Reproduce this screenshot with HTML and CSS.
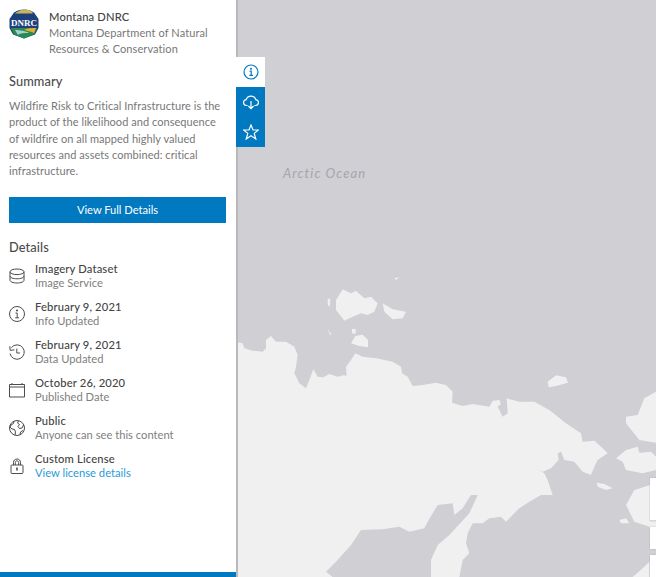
FILE: index.html
```html
<!DOCTYPE html>
<html lang="en">
<head>
<meta charset="utf-8">
<title>Montana DNRC</title>
<link rel="stylesheet" href="styles.css">
</head>
<body>
<div class="app">
  <aside class="panel">
    <div class="panel-body">
      <header class="owner">
        <svg class="logo" viewBox="0 0 30 30" aria-hidden="true">
          <path d="M15 0.5C19 0.5 22 1.5 25 3.5L29.5 10V19L26 25.5L15 29.5L4 25.5L0.5 19V10L5 3.5C8 1.5 11 0.5 15 0.5Z" fill="#1d3f7c"/>
          <path d="M7 3.5L12 1L17 0.5L22 1.5L24 4.5H6Z" fill="#c9b45a"/>
          <path d="M2 19H28L25.5 25L15 29.5L5 25.5Z" fill="#2e8a4a"/>
          <path d="M15 21C19 19 24 19 27 19L25 24C21 22 18 22 15 21Z" fill="#e5ad35"/>
          <path d="M6 21C11 21 17 22 20 24C16 24 11 24 9 26Z" fill="#9fd0e0"/>
          <text class="logo-text" x="15" y="16.5" text-anchor="middle">DNRC</text>
        </svg>
        <div class="owner-text">
          <div class="owner-name">Montana DNRC</div>
          <div class="owner-org">Montana Department of Natural Resources &amp; Conservation</div>
        </div>
      </header>
      <h2 class="section-title summary-title">Summary</h2>
      <p class="summary">Wildfire Risk to Critical Infrastructure is the product of the likelihood and consequence of wildfire on all mapped highly valued resources and assets combined: critical infrastructure.</p>
      <a class="primary-btn">View Full Details</a>
      <h2 class="section-title details-title">Details</h2>
      <ul class="details">
        <li class="detail">
          <svg class="detail-icon" viewBox="0 0 16 16"><ellipse cx="8" cy="3.8" rx="7" ry="2.8"/><path d="M1 3.8V12.2C1 13.8 4 15 8 15S15 13.8 15 12.2V3.8M1 8C1 9.6 4 10.8 8 10.8S15 9.6 15 8"/></svg>
          <div><div class="detail-title">Imagery Dataset</div><div class="detail-sub">Image Service</div></div>
        </li>
        <li class="detail">
          <svg class="detail-icon" viewBox="0 0 16 16"><circle cx="8" cy="8" r="7.5"/><circle class="dot" cx="8" cy="4.6" r="1"/><path d="M6.5 7H8.2V11.8M6.2 11.8H10"/></svg>
          <div><div class="detail-title">February 9, 2021</div><div class="detail-sub">Info Updated</div></div>
        </li>
        <li class="detail">
          <svg class="detail-icon" viewBox="0 0 16 16"><path d="M2.4 3.6A7.2 7.2 0 1 1 1 9.5"/><path d="M0.8 2.2L1.2 6.4L5.4 5.8"/><path d="M7.8 4.6V9H11"/></svg>
          <div><div class="detail-title">February 9, 2021</div><div class="detail-sub">Data Updated</div></div>
        </li>
        <li class="detail">
          <svg class="detail-icon" viewBox="0 0 16 16"><path d="M0.5 2.5H15.5V15H0.5ZM0.5 5H15.5M3 1V3M13 1V3M5.5 2V2.5M8 2V2.5M10.5 2V2.5"/></svg>
          <div><div class="detail-title">October 26, 2020</div><div class="detail-sub">Published Date</div></div>
        </li>
        <li class="detail">
          <svg class="detail-icon" viewBox="0 0 16 16"><circle cx="8" cy="8" r="7.5"/><path d="M5 1.3L4.5 3.5L2 5L1 7L3 9L5.5 9.5L6.5 12L6 15M9.5 1L8.5 3L10.5 4.5L9 6.5L10.5 8.5L13 8L14.5 5M11 15L11.5 12L14 10.5"/></svg>
          <div><div class="detail-title">Public</div><div class="detail-sub">Anyone can see this content</div></div>
        </li>
        <li class="detail">
          <svg class="detail-icon" viewBox="0 0 16 16"><rect x="2" y="7" width="12" height="8.5" rx="1"/><path d="M4.5 7V4.5C4.5 2.4 6 1 8 1S11.5 2.4 11.5 4.5V7M6.3 7V4.6C6.3 3.5 7 2.8 8 2.8S9.7 3.5 9.7 4.6V7"/><path class="bold" d="M8 9.6V12.6"/></svg>
          <div><div class="detail-title">Custom License</div><a class="detail-link">View license details</a></div>
        </li>
      </ul>
    </div>
    <div class="panel-foot"></div>
  </aside>
  <main class="map">
    <svg class="map-land" viewBox="0 -780 1260 1731" preserveAspectRatio="none" aria-hidden="true">
      <path d="M0 245L20 250L25 265L50 272L80 275L90 265L90 240L105 228L120 245L150 245L175 260L185 285L180 320L175 340L190 370L210 385L220 360L232 328L245 350L262 352L280 342L305 350L325 345L332 350L330 320L345 300L358 280L380 290L420 295L470 305L495 320L498 340L515 350L530 378L560 375L600 368L630 375L650 395L648 428L680 438L710 432L760 440L770 422L790 420L795 432L785 440L800 470L815 460L812 415L850 425L895 425L940 450L990 490L1035 520L1040 545L1075 542L1100 565L1115 580L1085 600L1075 620L1065 645L1040 635L1015 605L985 600L975 575L965 580L968 600L945 625L920 635L900 625L925 640L935 660L950 705L915 705L880 725L850 745L810 785L795 770L760 775L740 790L710 790L695 820L690 850L700 880L680 900L670 951L585 951L585 900L605 855L640 825L700 760L725 705L705 705L680 745L655 765L650 730L605 735L575 785L565 805L520 815L490 800L440 808L375 810L345 855L300 905L270 935L290 951L0 951Z"/>
      <path d="M300 120L320 88L345 100L360 92L385 115L405 110L425 130L415 155L395 165L375 160L340 175L325 182L300 150Z"/>
      <path d="M440 130L470 148L510 155L500 175L470 178L445 155Z"/>
      <path d="M345 250L358 228L380 224L396 240L396 262L370 258Z"/>
      <path d="M348 206L360 208L358 222L348 220Z"/>
      <path d="M275 115L283 118L282 140L275 135Z"/>
      <path d="M275 207L287 224L282 224Z"/>
      <path d="M475 55L490 52L480 60Z"/>
      <path d="M935 365L960 346L990 352L996 368L960 378L938 382Z"/>
      <path d="M1260 395L1225 415L1205 465L1170 470L1170 490L1210 540L1260 548Z"/>
      <path d="M1140 595L1170 570L1205 560L1210 578L1245 575L1260 590L1260 630L1220 640L1170 630L1160 605Z"/>
      <path d="M1260 670L1195 690L1170 735L1195 785L1240 800L1260 830Z"/>
      <path d="M1150 780L1170 775L1180 790L1155 790Z"/>
      <path d="M1082 668L1105 672L1130 685L1110 690L1085 680Z"/>
      <path d="M1190 951L1220 925L1240 905L1240 951Z"/>
    </svg>
    <div class="map-label">Arctic Ocean</div>
    <nav class="tabs">
      <button class="tab tab-active">
        <svg viewBox="0 0 16 16"><circle cx="8" cy="8" r="7"/><circle class="dot" cx="8" cy="4.8" r="1"/><path d="M6.6 7.2H8.2V11.4M6.4 11.4H10"/></svg>
      </button>
      <button class="tab">
        <svg viewBox="0 0 16 16"><path d="M4.6 11.5H3.5C1.8 11.5 0.5 10.2 0.5 8.6C0.5 7 1.7 5.8 3.2 5.7C3.8 3.6 5.7 2.2 8 2.2C10.3 2.2 12.2 3.6 12.8 5.7C14.3 5.8 15.5 7 15.5 8.6C15.5 10.2 14.2 11.5 12.5 11.5H11.4M8 7V14.6M5.4 12L8 14.6L10.6 12"/></svg>
      </button>
      <button class="tab">
        <svg viewBox="0 0 16 16"><path d="M8 1L10 6H15.5L11.2 9.4L12.8 15L8 11.8L3.2 15L4.8 9.4L0.5 6H6Z"/></svg>
      </button>
    </nav>
    <div class="map-widgets">
      <div class="widget widget-zoom"></div>
      <div class="widget widget-home"></div>
      <div class="widget widget-last"></div>
    </div>
  </main>
</div>
</body>
</html>
```

FILE: styles.css
```css
* { box-sizing: border-box; }
html, body { margin: 0; height: 100%; overflow: hidden; }
body { font-family: "Lato", "Liberation Sans", sans-serif; color: #4c4c4c; }
.app { display: flex; width: 656px; height: 577px; }

.panel { width: 238px; flex: none; display: flex; flex-direction: column; background: #fff; border-right: 2px solid #b8b8bd; z-index: 1; }
.panel-body { flex: 1; padding: 8px 10px 0 9px; }
.panel-foot { height: 5px; background: #0079c1; }

.owner { display: flex; gap: 10px; }
.logo { width: 30px; height: 30px; flex: none; margin-top: 1px; }
.logo-text { font-family: "Liberation Serif", serif; font-size: 9px; font-weight: 700; fill: #fff; }
.owner-text { padding-top: 1px; }
.owner-name { font-size: 11.2px; font-weight: 500; line-height: 16px; letter-spacing: 0.15px; color: #444; }
.owner-org { font-size: 11px; line-height: 16.4px; letter-spacing: 0.1px; color: #777; }

.section-title { margin: 0; font-size: 12.8px; font-weight: 500; line-height: 18px; letter-spacing: 0.1px; color: #4c4c4c; }
.summary-title { margin-top: 14px; }
.summary { margin: 8px 0 0; font-size: 11px; line-height: 16.4px; letter-spacing: 0.05px; color: #777; }
.primary-btn { display: block; margin-top: 17px; height: 26px; background: #0079c1; color: #fff; font-size: 11.1px; line-height: 26px; text-align: center; }
.details-title { margin-top: 15px; }

.details { list-style: none; margin: 6px 0 0; padding: 0; display: flex; flex-direction: column; gap: 10px; }
.detail { display: flex; align-items: center; gap: 10px; height: 28px; }
.detail-icon { width: 16px; height: 16px; flex: none; fill: none; stroke: #4c4c4c; stroke-width: 1; }
.detail-icon .dot { fill: #4c4c4c; stroke: none; }
.detail-icon .bold { stroke-width: 1.6; }
.detail-title { font-size: 11.2px; font-weight: 500; line-height: 14px; letter-spacing: 0.15px; color: #444; }
.detail-sub { font-size: 11.2px; line-height: 14px; color: #808080; }
.detail-link { display: block; font-size: 11.2px; line-height: 14px; color: #2a9ad8; }

.map { position: relative; flex: 1; background: #cfcfd4; }
.map-land { position: absolute; left: -2px; top: 0; width: 420px; height: 577px; fill: #f0f0f0; }
.map-label { position: absolute; left: 45px; top: 165px; font-size: 13px; font-style: italic; letter-spacing: 1.1px; color: #a6a6ac; }

.tabs { position: absolute; z-index: 3; left: -2px; top: 57px; width: 29px; display: flex; flex-direction: column; background: #0079c1; }
.tab { display: flex; align-items: center; justify-content: center; width: 29px; height: 30px; padding: 0; border: 0; background: #0079c1; }
.tab svg { width: 16px; height: 16px; fill: none; stroke: #fff; stroke-width: 1.2; }
.tab-active { background: #fff; }
.tab-active svg { stroke: #0079c1; }
.tab-active .dot { fill: #0079c1; stroke: none; }

.map-widgets { position: absolute; right: 0; top: 478px; width: 6px; display: flex; flex-direction: column; }
.widget { background: #fff; box-shadow: 0 0 1px #9a9a9a; }
.widget-zoom { height: 43px; border-bottom: 1px solid #d8d8d8; }
.widget-home { height: 22px; margin-top: 6px; }
.widget-last { height: 30px; margin-top: 6px; }
```
